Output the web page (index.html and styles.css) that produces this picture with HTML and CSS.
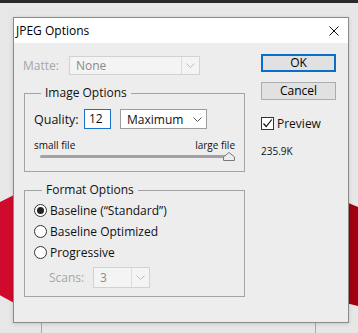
FILE: index.html
```html
<!DOCTYPE html>
<html lang="en">
<head>
  <meta charset="UTF-8">
  <meta name="viewport" content="width=device-width, initial-scale=1.0">
  <title>JPEG Options</title>
  <link rel="stylesheet" href="styles.css">
</head>
<body>
  <div class="desk">
    <div class="topbar"></div>
    <!-- trozos de la imagen detras del dialogo -->
    <div class="red red-left"></div>
    <div class="red red-right"></div>
    <div class="guide guide-left"></div>
    <div class="guide guide-right"></div>

    <div class="dialog">
      <div class="titlebar">
        <span class="title">JPEG Options</span>
        <svg class="close" width="10" height="10" viewBox="0 0 10 10">
          <path d="M0.5 0.5 L9.5 9.5 M9.5 0.5 L0.5 9.5" stroke="#111" stroke-width="1" fill="none"/>
        </svg>
      </div>

      <div class="dialog-body">
        <div class="main-col">
          <div class="matte-row">
            <span class="label disabled">Matte:</span>
            <div class="select select-matte is-disabled">
              <span class="select-value">None</span>
              <span class="select-arrow">
                <svg width="9" height="5" viewBox="0 0 9 5"><path d="M0.5 0.5 L4.5 4.5 L8.5 0.5" stroke="#bdbdbd" fill="none"/></svg>
              </span>
            </div>
          </div>

          <fieldset class="group image-group">
            <legend>Image Options</legend>
            <div class="quality-row">
              <span class="label">Quality:</span>
              <div class="textbox">12</div>
              <div class="select select-quality">
                <span class="select-value">Maximum</span>
                <span class="select-arrow">
                  <svg width="9" height="5" viewBox="0 0 9 5"><path d="M0.5 0.5 L4.5 4.5 L8.5 0.5" stroke="#555" fill="none"/></svg>
                </span>
              </div>
            </div>
            <div class="slider-labels">
              <span>small file</span>
              <span>large file</span>
            </div>
            <div class="slider">
              <div class="track"></div>
              <svg class="thumb" width="12" height="9" viewBox="0 0 12 9">
                <path d="M0.5 8.5 L0.5 5 L6 0.5 L11.5 5 L11.5 8.5 Z" fill="#ececec" stroke="#7a7a7a"/>
              </svg>
            </div>
          </fieldset>

          <fieldset class="group format-group">
            <legend>Format Options</legend>
            <div class="radio-row">
              <span class="radio checked"></span>
              <span>Baseline (“Standard”)</span>
            </div>
            <div class="radio-row">
              <span class="radio"></span>
              <span>Baseline Optimized</span>
            </div>
            <div class="radio-row">
              <span class="radio"></span>
              <span>Progressive</span>
            </div>
            <div class="scans-row">
              <span class="label disabled">Scans:</span>
              <div class="select select-scans is-disabled">
                <span class="select-value">3</span>
                <span class="select-arrow">
                  <svg width="9" height="5" viewBox="0 0 9 5"><path d="M0.5 0.5 L4.5 4.5 L8.5 0.5" stroke="#bdbdbd" fill="none"/></svg>
                </span>
              </div>
            </div>
          </fieldset>
        </div>

        <div class="side-col">
          <button class="btn btn-default">OK</button>
          <button class="btn">Cancel</button>
          <label class="check-row">
            <span class="checkbox">
              <svg width="11" height="11" viewBox="0 0 11 11"><path d="M1.5 5.5 L4.2 8.5 L9.8 1.5" stroke="#111" stroke-width="1.2" fill="none"/></svg>
            </span>
            <span>Preview</span>
          </label>
          <div class="file-size">235.9K</div>
        </div>
      </div>
    </div>
  </div>
</body>
</html>
```

FILE: styles.css
```css
* {
  margin: 0;
  padding: 0;
  box-sizing: border-box;
}

body {
  font-family: 'Open Sans', 'Noto Sans', sans-serif;
  font-size: 12px;
  color: #111;
  background: #e6e6e6;
}

.desk {
  position: relative;
  width: 358px;
  height: 333px;
  overflow: hidden;
  background: #e7e7e7;
}

.topbar {
  height: 3px;
  background: #2a2a2a;
}

/* fondo: foto roja y guias */
.red {
  position: absolute;
}

.red-left {
  left: 0;
  top: 194px;
  width: 16px;
  height: 110px;
  background: #cf0a2c;
  clip-path: polygon(0 8px, 100% 0, 100% 100%, 0 92%);
}

.red-right {
  left: 346px;
  top: 202px;
  width: 12px;
  height: 104px;
  background: #a3000f;
  clip-path: polygon(0 0, 100% 5px, 100% 100%, 0 97%);
}

.guide {
  position: absolute;
  top: 318px;
  width: 1px;
  height: 20px;
  background: #a9a9a9;
}

.guide-left { left: 41px; }
.guide-right { left: 315px; }

/* ventana */
.dialog {
  position: absolute;
  left: 13px;
  top: 17px;
  width: 336px;
  height: 306px;
  background: #ededed;
  border: 1px solid #8a8a8a;
  box-shadow: 0 1px 4px rgba(0, 0, 0, 0.15);
}

.titlebar {
  height: 25px;
  background: #ffffff;
  display: flex;
  align-items: center;
  justify-content: space-between;
  padding: 0 9px 0 2px;
}

.title {
  font-size: 12px;
  color: #000;
}

.dialog-body {
  display: flex;
  gap: 16px;
  padding: 11px 11px 0 9px;
}

.main-col {
  width: 222px;
}

.label {
  color: #111;
}

.label.disabled {
  color: #a6a6a6;
}

.matte-row {
  display: flex;
  align-items: center;
  margin-top: 2px;
  height: 19px;
}

.matte-row .label {
  width: 46px;
}

.select {
  display: flex;
  align-items: stretch;
  background: #fff;
  border: 1px solid #9d9d9d;
}

.select-value {
  flex: 1;
  display: flex;
  align-items: center;
  padding-left: 6px;
}

.select-arrow {
  width: 18px;
  display: flex;
  align-items: center;
  justify-content: center;
}

.select.is-disabled {
  background: #f4f4f4;
  border-color: #d2d2d2;
}

.select.is-disabled .select-value {
  color: #8a8a8a;
}

.select.is-disabled .select-arrow {
  border-left: 1px solid #dddddd;
}

.select-matte {
  width: 131px;
  height: 19px;
}

.group {
  margin-left: 1px;
  border: 1px solid #a3a3a3;
  min-inline-size: 0;
}

.group legend {
  margin-left: 7px;
  padding: 0 4px;
  line-height: 16px;
  font-size: 12px;
}

.image-group {
  margin-top: 10px;
  padding: 8px 9px 10px 9px;
}

.format-group {
  margin-top: 10px;
  padding: 2px 9px 8px 9px;
}

.format-group legend {
  margin-left: 8px;
}

.quality-row {
  display: flex;
  align-items: center;
  height: 20px;
}

.quality-row .label {
  width: 50px;
  font-size: 12.5px;
}

.textbox {
  width: 27px;
  height: 20px;
  background: #fff;
  border: 1px solid #1a73c8;
  padding-left: 4px;
  line-height: 18px;
  font-size: 12px;
}

.select-quality {
  margin-left: 9px;
  width: 87px;
  height: 20px;
}

.slider-labels {
  display: flex;
  justify-content: space-between;
  margin-top: 10px;
  font-size: 10px;
  line-height: 12px;
}

.slider {
  position: relative;
  height: 10px;
  margin-left: 6px;
}

.track {
  position: absolute;
  left: 0;
  right: 6px;
  top: 4px;
  height: 3px;
  border-radius: 2px;
  background: #a2a2a2;
}

.thumb {
  position: absolute;
  right: 0;
  top: 1px;
}

.radio-row {
  display: flex;
  align-items: center;
  height: 21px;
  font-size: 12px;
}

.radio {
  width: 13px;
  height: 13px;
  border: 1px solid #333;
  border-radius: 50%;
  background: #fff;
  margin-right: 3px;
  display: flex;
  align-items: center;
  justify-content: center;
}

.radio.checked::before {
  content: '';
  width: 7px;
  height: 7px;
  border-radius: 50%;
  background: #222;
}

.scans-row {
  display: flex;
  align-items: center;
  margin-top: 4px;
  padding-left: 15px;
}

.scans-row .label {
  width: 44px;
}

.select-scans {
  width: 57px;
  height: 21px;
}

.select-scans .select-value {
  color: #666;
}

/* columna derecha */
.side-col {
  width: 75px;
  display: flex;
  flex-direction: column;
}

.btn {
  font-family: inherit;
  font-size: 12px;
  height: 18px;
  background: #e1e1e1;
  border: 1px solid #adadad;
  color: #000;
  line-height: 14px;
}

.btn + .btn {
  margin-top: 10px;
}

.btn-default {
  border: 2px solid #0a6fc9;
}

.check-row {
  display: flex;
  align-items: center;
  margin-top: 15px;
  font-size: 12px;
}

.checkbox {
  width: 13px;
  height: 13px;
  border: 1px solid #333;
  background: #fff;
  margin-right: 3px;
  display: flex;
  align-items: center;
  justify-content: center;
}

.file-size {
  margin-top: 12px;
  font-size: 10px;
}
```
